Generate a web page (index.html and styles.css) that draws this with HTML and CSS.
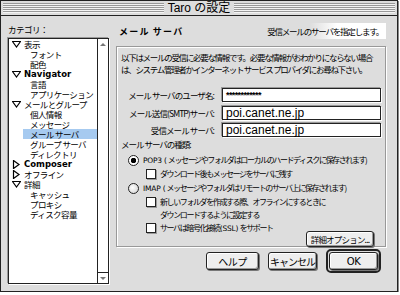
FILE: index.html
```html
<!DOCTYPE html>
<html lang="ja">
<head>
    <meta charset="UTF-8">
    <title>Taro の設定</title>
    <link rel="stylesheet" href="styles.css">
</head>
<body>
    <div class="window">
        <div class="titlebar">
            <span class="title">Taro の設定</span>
        </div>
        <div class="content">
            <div class="sidebar">
                <div class="cat-label">カテゴリ：</div>
                <div class="listbox">
                    <ul class="tree">
                        <li class="top"><svg class="tw" viewBox="0 0 9 7"><path d="M0.5 0.5h8l-4 5.5z"/></svg>表示</li>
                        <li class="sub">フォント</li>
                        <li class="sub">配色</li>
                        <li class="top latin"><svg class="tw" viewBox="0 0 9 7"><path d="M0.5 0.5h8l-4 5.5z"/></svg>Navigator</li>
                        <li class="sub">言語</li>
                        <li class="sub">アプリケーション</li>
                        <li class="top"><svg class="tw" viewBox="0 0 9 7"><path d="M0.5 0.5h8l-4 5.5z"/></svg>メールとグループ</li>
                        <li class="sub">個人情報</li>
                        <li class="sub">メッセージ</li>
                        <li class="sub selected">メール サーバ</li>
                        <li class="sub">グループ サーバ</li>
                        <li class="sub">ディレクトリ</li>
                        <li class="top latin"><svg class="tw closed" viewBox="0 0 9 9"><path d="M1.5 0.5v8l5.5-4z"/></svg>Composer</li>
                        <li class="top"><svg class="tw closed" viewBox="0 0 9 9"><path d="M1.5 0.5v8l5.5-4z"/></svg>オフライン</li>
                        <li class="top"><svg class="tw" viewBox="0 0 9 7"><path d="M0.5 0.5h8l-4 5.5z"/></svg>詳細</li>
                        <li class="sub">キャッシュ</li>
                        <li class="sub">プロキシ</li>
                        <li class="sub">ディスク容量</li>
                    </ul>
                    <div class="scrollbar">
                        <span class="arrow up"></span>
                        <span class="arrow down"></span>
                    </div>
                </div>
            </div>
            <div class="main">
                <div class="header">
                    <span class="header-title">メール サーバ</span>
                    <span class="header-note">受信メールのサーバを指定します。</span>
                </div>
                <div class="group">
                    <p class="desc">以下はメールの受信に必要な情報です。必要な情報がおわかりにならない場合<br>は、システム管理者かインターネット サービス プロバイダにお尋ね下さい。</p>
                    <div class="fields">
                        <label class="field-label">メール サーバのユーザ名:</label>
                        <div class="input pw">************</div>
                        <label class="field-label">メール送信(SMTP)サーバ:</label>
                        <div class="input">poi.canet.ne.jp</div>
                        <label class="field-label">受信メール サーバ:</label>
                        <div class="input">poi.canet.ne.jp</div>
                    </div>
                    <div class="kind-label">メール サーバの種類:</div>
                    <div class="option">
                        <span class="radio checked"></span>
                        <span><span class="lat">POP3 (</span>メッセージやフォルダはローカルのハードディスクに保存されます)</span>
                    </div>
                    <div class="option sub-option">
                        <span class="check"></span>
                        <span>ダウンロード後もメッセージをサーバに残す</span>
                    </div>
                    <div class="option">
                        <span class="radio"></span>
                        <span><span class="lat">IMAP (</span>メッセージやフォルダはリモートのサーバ上に保存されます)</span>
                    </div>
                    <div class="option sub-option">
                        <span class="check"></span>
                        <span>新しいフォルダを作成する際、オフラインにするときに<br>ダウンロードするように設定する</span>
                    </div>
                    <div class="option sub-option">
                        <span class="check"></span>
                        <span>サーバは暗号化接続 <span class="lat">(SSL)</span> をサポート</span>
                    </div>
                    <div class="group-actions">
                        <button class="btn small">詳細オプション...</button>
                    </div>
                </div>
                <div class="actions">
                    <button class="btn help">ヘルプ</button>
                    <button class="btn cancel">キャンセル</button>
                    <div class="default-ring"><button class="btn ok">OK</button></div>
                </div>
            </div>
        </div>
    </div>
</body>
</html>
```

FILE: styles.css
```css
body {
    margin: 0;
    background-color: #ffffff;
    font-family: "Noto Sans CJK JP", "DejaVu Sans", sans-serif;
    font-size: 9px;
    color: #000;
}
.window {
    width: 398px;
    height: 292px;
    box-sizing: border-box;
    background-color: #dddddd;
    border: 1px solid #222;
    box-shadow: 1px 1px 0 #888;
    display: flex;
    flex-direction: column;
}
.titlebar {
    height: 15px;
    box-sizing: border-box;
    border-bottom: 1px solid #222;
    padding: 2px 2px;
    display: flex;
    align-items: center;
    justify-content: center;
    background-color: #dddddd;
    background-image: repeating-linear-gradient(to bottom, #999 0, #999 1px, #f4f4f4 1px, #f4f4f4 2px);
    background-clip: content-box;
}
.title {
    background-color: #dddddd;
    padding: 0 4px;
    font-family: "Liberation Sans", "Noto Sans CJK JP", sans-serif;
    font-size: 12px;
    line-height: 11px;
}
.content {
    flex: 1;
    display: flex;
    padding: 7px 0 0 7px;
    gap: 4px;
}
.sidebar {
    width: 101px;
    display: flex;
    flex-direction: column;
}
.cat-label {
    height: 15px;
    line-height: 12px;
    font-size: 8.5px;
    letter-spacing: -0.5px;
}
.listbox {
    height: 244px;
    border: 1px solid #222;
    background: #fff;
    display: flex;
    box-shadow: 1px 1px 0 #fff, -1px -1px 0 #999;
}
.tree {
    list-style: none;
    margin: 0;
    padding: 0;
    flex: 1;
}
.tree li {
    height: 10px;
    line-height: 10px;
    font-size: 8.5px;
    white-space: nowrap;
    letter-spacing: -0.6px;
    display: flex;
    align-items: center;
}
.tree li.top {
    padding-left: 3px;
}
.tree li.sub {
    padding-left: 7px;
    margin-left: 14px;
}
.tree li.selected {
    background-color: #a6caf0;
}
.tree li.latin {
    font-family: "DejaVu Sans", sans-serif;
    font-size: 8.5px;
    font-weight: bold;
    letter-spacing: 0;
}
.tw {
    width: 9px;
    height: 7px;
    margin-right: 3px;
    flex: none;
}
.tw.closed {
    height: 9px;
}
.tw path {
    fill: #fff;
    stroke: #000;
    stroke-width: 1.2;
}
.scrollbar {
    width: 10px;
    border-left: 1px solid #222;
    background: #fff;
    display: flex;
    flex-direction: column;
    justify-content: space-between;
}
.arrow {
    height: 10px;
    display: flex;
    align-items: center;
    justify-content: center;
}
.arrow.down {
    border-top: 1px solid #222;
}
.arrow::before {
    content: "";
    border-left: 3px solid transparent;
    border-right: 3px solid transparent;
}
.arrow.up::before {
    border-bottom: 3px solid #777;
}
.arrow.down::before {
    border-top: 3px solid #777;
}
.main {
    width: 273px;
    display: flex;
    flex-direction: column;
}
.header {
    height: 16px;
    display: flex;
    align-items: center;
    justify-content: space-between;
    padding: 0 0 0 6px;
    background: linear-gradient(to right, #dddddd 0, #dddddd 72%, #ffffff 82%, #ffffff 100%);
}
.header-title {
    font-weight: bold;
    letter-spacing: 1.2px;
}
.header-note {
    font-size: 8.5px;
    letter-spacing: -1.2px;
    padding-right: 3px;
}
.group {
    margin: 7px 0 0 3px;
    width: 270px;
    height: 201px;
    box-sizing: border-box;
    border: 1px solid #999;
    box-shadow: inset 1px 1px 0 #fff, 1px 1px 0 #fff;
    padding: 4px 6px 0 4px;
    display: flex;
    flex-direction: column;
}
.desc {
    margin: 0;
    font-size: 8.5px;
    line-height: 12px;
    letter-spacing: -1.3px;
    white-space: nowrap;
}
.fields {
    display: grid;
    grid-template-columns: 93px 159px;
    column-gap: 8px;
    row-gap: 3.5px;
    margin-top: 13px;
    align-items: center;
}
.field-label {
    text-align: right;
    font-size: 8.5px;
    letter-spacing: -0.9px;
    white-space: nowrap;
}
.input {
    height: 14px;
    box-sizing: border-box;
    border: 1px solid #222;
    background: #fff;
    box-shadow: -1px -1px 0 #999, 1px 1px 0 #fff;
    font-family: "Liberation Sans", sans-serif;
    font-size: 12px;
    line-height: 12px;
    padding-left: 3px;
}
.input.pw {
    font-size: 9px;
    font-weight: bold;
    letter-spacing: -0.6px;
    line-height: 13px;
}
.kind-label {
    margin-top: 1px;
    height: 12px;
    line-height: 12px;
    font-size: 8.5px;
    letter-spacing: -1px;
}
.option {
    display: flex;
    align-items: flex-start;
    gap: 4px;
    padding-left: 7px;
    font-size: 8px;
    line-height: 13.3px;
    letter-spacing: -1.4px;
    white-space: nowrap;
}
.option .lat {
    font-family: "DejaVu Sans", sans-serif;
    font-size: 7.5px;
    letter-spacing: -0.2px;
    margin-right: 1px;
}
.kind-label + .option {
    margin-top: 3px;
}
.sub-option {
    padding-left: 25px;
}
.radio {
    width: 9px;
    height: 9px;
    margin-top: 2px;
    border: 1px solid #222;
    border-radius: 50%;
    background: radial-gradient(circle at 40% 40%, #fff 0, #ddd 70%);
    flex: none;
}
.radio.checked {
    background: radial-gradient(circle, #000 0, #000 2.5px, #fff 3px);
}
.check {
    width: 8px;
    height: 8px;
    margin-top: 2px;
    border: 1px solid #222;
    background: #fff;
    box-shadow: 1px 1px 0 #999;
    flex: none;
}
.group-actions {
    display: flex;
    justify-content: flex-end;
    margin-top: -5px;
    padding-right: 5px;
}
.btn {
    font-family: "Noto Sans CJK JP", sans-serif;
    font-size: 9px;
    letter-spacing: -0.5px;
    background: #eee;
    border: 1px solid #222;
    border-radius: 3px;
    box-shadow: inset 1px 1px 0 #fff, inset -1px -1px 0 #999, 1px 1px 0 #777;
    height: 18px;
    padding: 0;
    color: #000;
}
.btn.small {
    height: 16px;
    width: 68px;
    font-size: 8.5px;
    letter-spacing: -0.8px;
}
.actions {
    display: flex;
    justify-content: flex-end;
    align-items: center;
    gap: 9px;
    margin-top: 2px;
    padding-right: 5px;
}
.actions .btn {
    font-size: 10px;
}
.btn.help {
    width: 53px;
}
.btn.cancel {
    width: 49px;
    letter-spacing: -1px;
}
.default-ring {
    border: 2px solid #222;
    border-radius: 5px;
    padding: 1px;
    display: flex;
}
.btn.ok {
    font-family: "DejaVu Sans", sans-serif;
    width: 49px;
}
```
